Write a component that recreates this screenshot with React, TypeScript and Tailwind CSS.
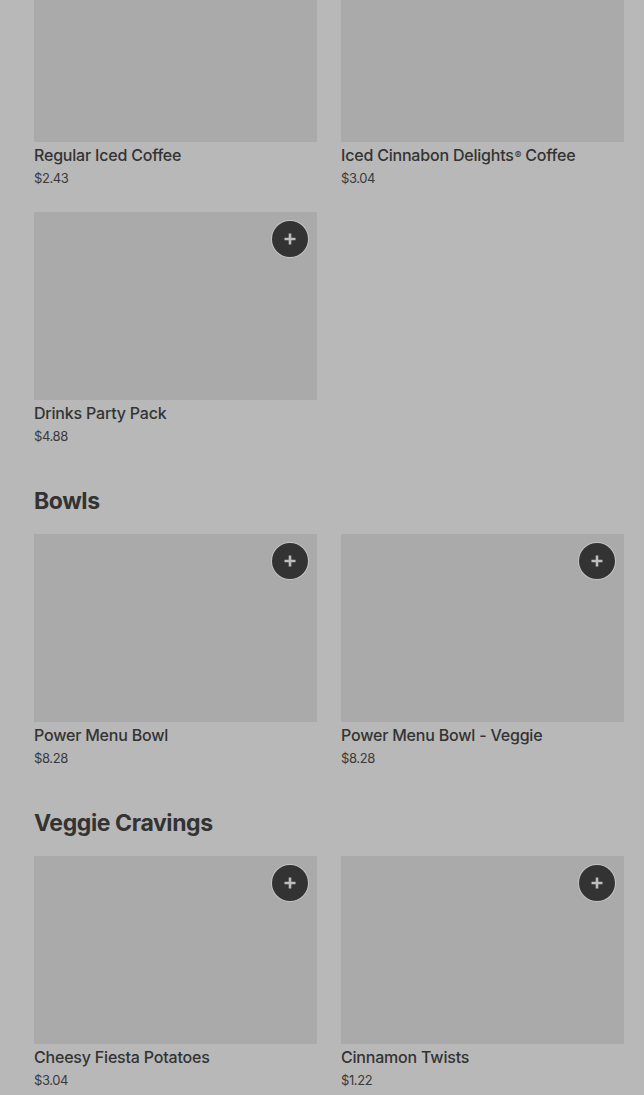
import React from "react";

type Item = { name: React.ReactNode; price: string };

const sections: { title?: string; items: Item[] }[] = [
  {
    items: [
      { name: "Regular Iced Coffee", price: "$2.43" },
      {
        name: (
          <>
            Iced Cinnabon Delights<sup className="text-[10px] relative -top-[2px] ml-[1px]">®</sup> Coffee
          </>
        ),
        price: "$3.04",
      },
      { name: "Drinks Party Pack", price: "$4.88" },
    ],
  },
  {
    title: "Bowls",
    items: [
      { name: "Power Menu Bowl", price: "$8.28" },
      { name: "Power Menu Bowl - Veggie", price: "$8.28" },
    ],
  },
  {
    title: "Veggie Cravings",
    items: [
      { name: "Cheesy Fiesta Potatoes", price: "$3.04" },
      { name: "Cinnamon Twists", price: "$1.22" },
    ],
  },
];

function Card({ item }: { item: Item }) {
  return (
    <div className="flex flex-col">
      <div className="relative h-[188px] bg-[#aaaaaa]">
        <div className="absolute right-[9px] top-[9px] flex h-[36px] w-[36px] items-center justify-center rounded-full bg-[#333333] shadow-[0_0_0_1px_#c4c4c4]">
          <svg width="14" height="14" viewBox="0 0 14 14">
            <path d="M7 1.5v11M1.5 7h11" stroke="#bdbdbd" strokeWidth="2.6" />
          </svg>
        </div>
      </div>
      <div className="mt-[3px] text-[16px] leading-5 font-medium tracking-[-0.2px] text-[#333333]">{item.name}</div>
      <div className="mt-[4px] text-[13px] leading-[18px] tracking-[-0.4px] text-[#3a3a3a]">{item.price}</div>
    </div>
  );
}

export default function App() {
  return (
    <div
      className="min-h-[1095px] w-full overflow-hidden bg-[#b8b8b8]"
      style={{ fontFamily: "Inter, 'Noto Sans', sans-serif" }}
    >
      <div className="-mt-[46px] pl-[34px] pr-[20px]">
        {sections.map((s, i) => (
          <section key={i} className={i === 0 ? "" : "mt-[42px]"}>
            {s.title && (
              <h2 className="mb-[19px] text-[23px] leading-[28px] font-bold tracking-[-0.4px] text-[#333333]">
                {s.title}
              </h2>
            )}
            <div className="grid grid-cols-2 gap-x-6 gap-y-[25px]">
              {s.items.map((it, j) => (
                <Card key={j} item={it} />
              ))}
            </div>
          </section>
        ))}
      </div>
    </div>
  );
}
